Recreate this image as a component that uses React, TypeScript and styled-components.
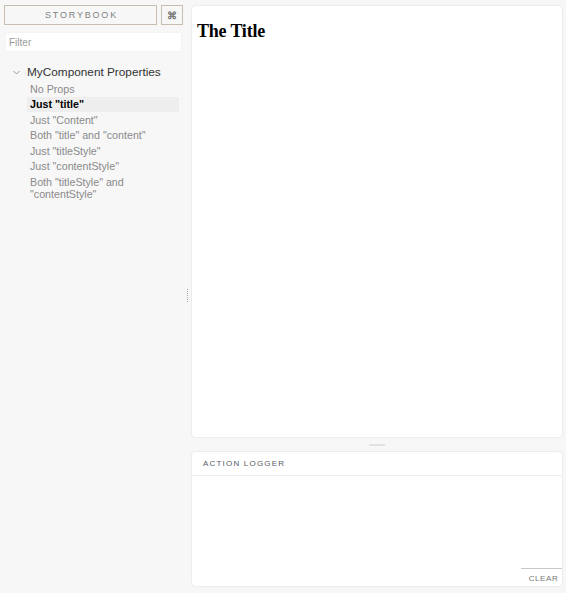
import React from "react";
import styled, { createGlobalStyle } from "styled-components";

const Global = createGlobalStyle`
  html, body { margin: 0; padding: 0; background: #f7f7f7; }
  body { font-family: "Liberation Sans", Arial, sans-serif; }
  * { box-sizing: border-box; }
`;

const Page = styled.div`
  display: flex;
  height: 593px;
  padding: 5px 3px 6px 4px;
`;

const Sidebar = styled.aside`
  width: 179px;
  display: flex;
  flex-direction: column;
`;

const HeaderRow = styled.div`
  display: flex;
  gap: 4px;
  height: 20px;
`;

const BrandButton = styled.div`
  flex: 1;
  border: 1px solid #c8bfb0;
  display: flex;
  align-items: center;
  justify-content: center;
  font-size: 9px;
  letter-spacing: 1.8px;
  color: #828282;
  padding-left: 2px;
`;

const ShortcutButton = styled.div`
  width: 22px;
  border: 1px solid #c8bfb0;
  display: flex;
  align-items: center;
  justify-content: center;
  font-size: 10px;
  font-weight: 700;
  color: #777;
`;

const FilterInput = styled.input`
  margin: 7px 1px 0 1px;
  height: 20px;
  border: 1px solid #f4f4f4;
  background: #fff;
  font-family: "Liberation Sans", Arial, sans-serif;
  font-size: 10px;
  padding: 0 3px;
  outline: none;
  color: #333;
  &::placeholder { color: #9a9a9a; }
`;

const Tree = styled.div`
  margin-top: 12px;
  display: flex;
  flex-direction: column;
`;

const KindRow = styled.div`
  display: flex;
  align-items: center;
  gap: 7px;
  padding-left: 9px;
  font-size: 11.8px;
  color: #333;
  height: 16px;
`;

const StoryList = styled.ul`
  list-style: none;
  margin: 1px 0 0 0;
  padding: 0 0 0 23px;
  width: 175px;
`;

const StoryItem = styled.li<{ $active?: boolean }>`
  font-size: 10.7px;
  line-height: 12px;
  padding: 1.75px 3px;
  color: ${(p) => (p.$active ? "#000" : "#8a8a8a")};
  font-weight: ${(p) => (p.$active ? 700 : 400)};
  background: ${(p) => (p.$active ? "#eee" : "transparent")};
`;

const Splitter = styled.div`
  width: 8px;
  display: flex;
  align-items: center;
  justify-content: center;
`;

const VGrip = styled.div`
  width: 1px;
  height: 14px;
  margin-left: 1px;
  background-image: linear-gradient(#aaa 50%, transparent 50%);
  background-size: 1px 2px;
`;

const Main = styled.main`
  flex: 1;
  display: flex;
  flex-direction: column;
`;

const Panel = styled.section`
  background: #fff;
  border: 1px solid #ececec;
  border-radius: 4px;
`;

const PreviewPanel = styled(Panel)`
  flex: 1;
  padding: 6px 5px;
`;

const StoryTitle = styled.h1`
  margin: 9px 0 0 0;
  font-family: "Liberation Serif", "Times New Roman", serif;
  font-weight: 700;
  font-size: 18px;
  letter-spacing: -0.2px;
  color: #000;
`;

const HSplit = styled.div`
  height: 13px;
  display: flex;
  align-items: center;
  justify-content: center;
`;

const HGrip = styled.div`
  width: 16px;
  height: 2px;
  background: #e2e2e2;
`;

const LoggerPanel = styled(Panel)`
  height: 136px;
  display: flex;
  flex-direction: column;
  position: relative;
`;

const LoggerHeader = styled.div`
  height: 24px;
  border-bottom: 1px solid #eee;
  display: flex;
  align-items: center;
  padding-left: 11px;
  font-size: 8px;
  letter-spacing: 1.2px;
  color: #555b66;
`;

const LoggerBody = styled.div`
  flex: 1;
`;

const ClearButton = styled.button`
  position: absolute;
  right: 0;
  bottom: 0;
  width: 41px;
  height: 18px;
  border: none;
  border-top: 1px solid #c8c8c8;
  background: #fff;
  font-family: "Liberation Sans", Arial, sans-serif;
  font-size: 8px;
  letter-spacing: 0.6px;
  color: #777;
  padding: 2px 0 0 4px;
  border-bottom-right-radius: 4px;
`;

const Chevron = () => (
  <svg width="7" height="5" viewBox="0 0 7 5" fill="none">
    <path d="M0.5 1 L3.5 4 L6.5 1" stroke="#999" strokeWidth="1" />
  </svg>
);

const stories = [
  "No Props",
  'Just "title"',
  'Just "Content"',
  'Both "title" and "content"',
  'Just "titleStyle"',
  'Just "contentStyle"',
  'Both "titleStyle" and "contentStyle"',
];

export default function App() {
  return (
    <>
      <Global />
      <Page>
        <Sidebar>
          <HeaderRow>
            <BrandButton>STORYBOOK</BrandButton>
            <ShortcutButton>⌘</ShortcutButton>
          </HeaderRow>
          <FilterInput placeholder="Filter" />
          <Tree>
            <KindRow>
              <Chevron />
              MyComponent Properties
            </KindRow>
            <StoryList>
              {stories.map((s, i) => (
                <StoryItem key={s} $active={i === 1}>
                  {s}
                </StoryItem>
              ))}
            </StoryList>
          </Tree>
        </Sidebar>
        <Splitter>
          <VGrip />
        </Splitter>
        <Main>
          <PreviewPanel>
            <StoryTitle>The Title</StoryTitle>
          </PreviewPanel>
          <HSplit>
            <HGrip />
          </HSplit>
          <LoggerPanel>
            <LoggerHeader>ACTION LOGGER</LoggerHeader>
            <LoggerBody />
            <ClearButton>CLEAR</ClearButton>
          </LoggerPanel>
        </Main>
      </Page>
    </>
  );
}
